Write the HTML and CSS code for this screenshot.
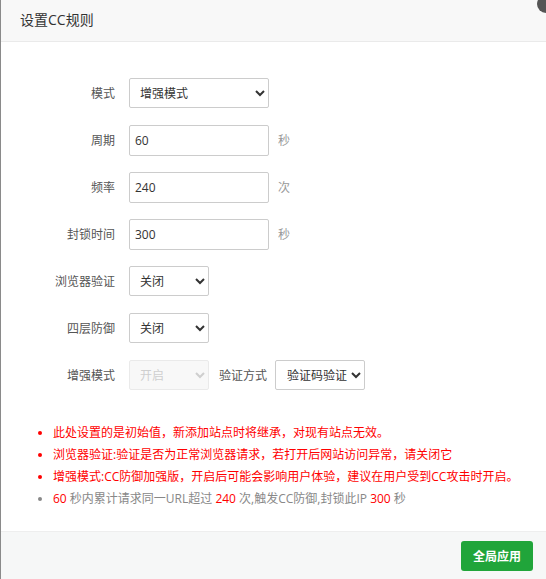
FILE: index.html
```html
<!DOCTYPE html>
<html lang="zh-CN">
<head>
    <meta charset="UTF-8">
    <title>设置CC规则</title>
    <link rel="stylesheet" href="styles.css">
</head>
<body>
    <div class="layer">
        <div class="layer-title">设置CC规则</div>
        <span class="layer-close"></span>

        <div class="layer-content">
            <div class="form">
                <div class="line">
                    <span class="tname">模式</span>
                    <select class="bt-select w140">
                        <option>增强模式</option>
                    </select>
                </div>
                <div class="line">
                    <span class="tname">周期</span>
                    <input class="bt-input w140" type="text" value="60">
                    <span class="unit">秒</span>
                </div>
                <div class="line">
                    <span class="tname">频率</span>
                    <input class="bt-input w140" type="text" value="240">
                    <span class="unit">次</span>
                </div>
                <div class="line">
                    <span class="tname">封锁时间</span>
                    <input class="bt-input w140" type="text" value="300">
                    <span class="unit">秒</span>
                </div>
                <div class="line">
                    <span class="tname">浏览器验证</span>
                    <select class="bt-select w80">
                        <option>关闭</option>
                    </select>
                </div>
                <div class="line">
                    <span class="tname">四层防御</span>
                    <select class="bt-select w80">
                        <option>关闭</option>
                    </select>
                </div>
                <div class="line">
                    <span class="tname">增强模式</span>
                    <select class="bt-select w80" disabled>
                        <option>开启</option>
                    </select>
                    <span class="sub-label">验证方式</span>
                    <select class="bt-select w90">
                        <option>验证码验证</option>
                    </select>
                </div>
            </div>

            <ul class="help">
                <li class="red">此处设置的是初始值，新添加站点时将继承，对现有站点无效。</li>
                <li class="red">浏览器验证:验证是否为正常浏览器请求，若打开后网站访问异常，请关闭它</li>
                <li class="red">增强模式:CC防御加强版，开启后可能会影响用户体验，建议在用户受到CC攻击时开启。</li>
                <li><span class="num">60</span> 秒内累计请求同一URL超过 <span class="num">240</span> 次,触发CC防御,封锁此IP <span class="num">300</span> 秒</li>
            </ul>
        </div>

        <div class="layer-btns">
            <button class="btn-success">全局应用</button>
        </div>
    </div>
</body>
</html>
```

FILE: styles.css
```css
body {
    margin: 0;
    padding: 0;
    font-family: "Open Sans", "Noto Sans CJK SC", sans-serif;
    font-size: 12px;
    color: #333;
    background: #fff;
}
.layer {
    position: relative;
    width: 545px;
    height: 579px;
    border-left: 1px solid #8a8a8a;
    display: flex;
    flex-direction: column;
    overflow: hidden;
}
.layer-title {
    height: 41px;
    line-height: 40px;
    padding-left: 19px;
    font-size: 14px;
    color: #333;
    background: #f8f8f8;
    border-bottom: 1px solid #eaeaea;
}
.layer-close {
    position: absolute;
    top: -5px;
    right: -9px;
    width: 18px;
    height: 18px;
    border-radius: 50%;
    background: #555;
}
.layer-content {
    flex: 1;
    padding: 35px 0 0 0;
}
.form {
    display: flex;
    flex-direction: column;
    gap: 15px;
}
.line {
    display: flex;
    align-items: center;
    height: 32px;
}
.tname {
    width: 114px;
    padding-right: 14px;
    text-align: right;
    color: #555;
}
.bt-input {
    box-sizing: border-box;
    height: 31px;
    padding: 0 5px;
    border: 1px solid #ccc;
    border-radius: 2px;
    font-family: inherit;
    font-size: 12px;
    color: #333;
    outline: none;
}
.bt-select {
    box-sizing: border-box;
    height: 30px;
    padding: 0 6px;
    border: 1px solid #ccc;
    border-radius: 2px;
    background: #fff;
    font-family: inherit;
    font-size: 12px;
    color: #333;
}
.bt-select:disabled {
    background: #f6f6f6;
    color: #bbb;
    border-color: #e2e2e2;
}
.w140 {
    width: 140px;
}
.w80 {
    width: 80px;
}
.w90 {
    width: 90px;
    padding: 0 0 0 7px;
}
.unit {
    margin-left: 9px;
    color: #999;
}
.sub-label {
    margin: 0 8px 0 10px;
    color: #555;
}
.help {
    margin: 31px 0 0 0;
    padding-left: 52px;
    color: #888;
}
.help li {
    line-height: 22px;
}
.help li.red {
    color: #f00;
}
.help .num {
    color: #f00;
}
.layer-btns {
    height: 48px;
    box-sizing: border-box;
    display: flex;
    justify-content: flex-end;
    align-items: center;
    padding-right: 13px;
    background: #f6f7f7;
    border-top: 1px solid #eee;
}
.btn-success {
    width: 72px;
    height: 30px;
    border: none;
    border-radius: 3px;
    background: #20a53a;
    color: #fff;
    font-family: inherit;
    font-size: 12px;
    font-weight: bold;
    cursor: pointer;
}
```
